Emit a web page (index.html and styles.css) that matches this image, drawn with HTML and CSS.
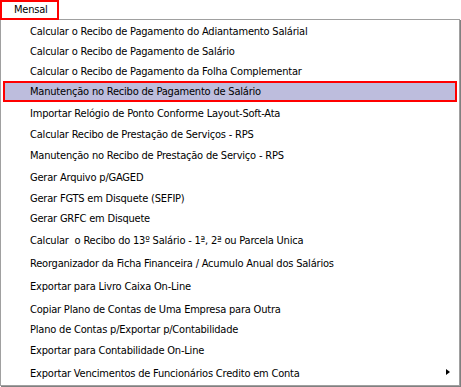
FILE: index.html
```html
<!DOCTYPE html>
<html lang="pt-BR">
<head>
    <meta charset="UTF-8">
    <title>Menu Mensal</title>
    <link rel="stylesheet" href="styles.css">
</head>
<body>
    <div class="menubar">
        <span class="menu-title">Mensal</span>
    </div>

    <ul class="menu">
        <li class="item h20">Calcular o Recibo de Pagamento do Adiantamento Salárial</li>
        <li class="item h20">Calcular o Recibo de Pagamento de Salário</li>
        <li class="item h20">Calcular o Recibo de Pagamento da Folha Complementar</li>
        <li class="item h21 selected">Manutenção no Recibo de Pagamento de Salário</li>
        <li class="item h22">Importar Relógio de Ponto Conforme Layout-Soft-Ata</li>
        <li class="item h21">Calcular Recibo de Prestação de Serviços - RPS</li>
        <li class="item h21">Manutenção no Recibo de Prestação de Serviço - RPS</li>
        <li class="item h22">Gerar Arquivo p/GAGED</li>
        <li class="item h20">Gerar FGTS em Disquete (SEFIP)</li>
        <li class="item h21">Gerar GRFC em Disquete</li>
        <li class="item h23">Calcular &nbsp;o Recibo do 13º Salário - 1ª, 2ª ou Parcela Unica</li>
        <li class="item h23">Reorganizador da Ficha Financeira / Acumulo Anual dos Salários</li>
        <li class="item h23">Exportar para Livro Caixa On-Line</li>
        <li class="item h22">Copiar Plano de Contas de Uma Empresa para Outra</li>
        <li class="item h19">Plano de Contas p/Exportar p/Contabilidade</li>
        <li class="item h22">Exportar para Contabilidade On-Line</li>
        <li class="item h24 submenu">Exportar Vencimentos de Funcionários Credito em Conta</li>
    </ul>
</body>
</html>
```

FILE: styles.css
```css
* {
    margin: 0;
    padding: 0;
    box-sizing: border-box;
}

body {
    font-family: "DejaVu Sans Condensed", "DejaVu Sans", sans-serif;
    font-size: 11px;
    letter-spacing: -0.2px;
    color: #000;
    background-color: #fff;
    width: 461px;
    height: 387px;
    overflow: hidden;
}

/* barra do menu */
.menubar {
    height: 19px;
    display: flex;
}

.menu-title {
    width: 59px;
    height: 20px;
    border: 2px solid #f00;
    padding-left: 12px;
    line-height: 15px;
    background-color: #fff;
    position: relative;
    z-index: 2;
}

/* lista suspensa */
.menu {
    list-style: none;
    width: 460px;
    height: 367px;
    border: 1px solid #a0a0a0;
    box-shadow: 1px 1px 0 #808080, 2px 2px 0 #c4c4c4;
    padding: 1px 1px 0 2px;
    background-color: #fff;
}

.item {
    display: flex;
    align-items: center;
    padding-left: 27px;
    white-space: nowrap;
    position: relative;
}

.h19 { height: 19px; }
.h20 { height: 20px; }
.h21 { height: 21px; }
.h22 { height: 22px; }
.h23 { height: 23px; }
.h24 { height: 24px; }

.item.selected {
    background-color: #bdbddd;
    border: 2px solid #f00;
    padding-left: 25px;
    margin-right: 1px;
}

.submenu::after {
    content: "";
    position: absolute;
    right: 8px;
    top: 8px;
    border-left: 4px solid #000;
    border-top: 3.5px solid transparent;
    border-bottom: 3.5px solid transparent;
}
```
